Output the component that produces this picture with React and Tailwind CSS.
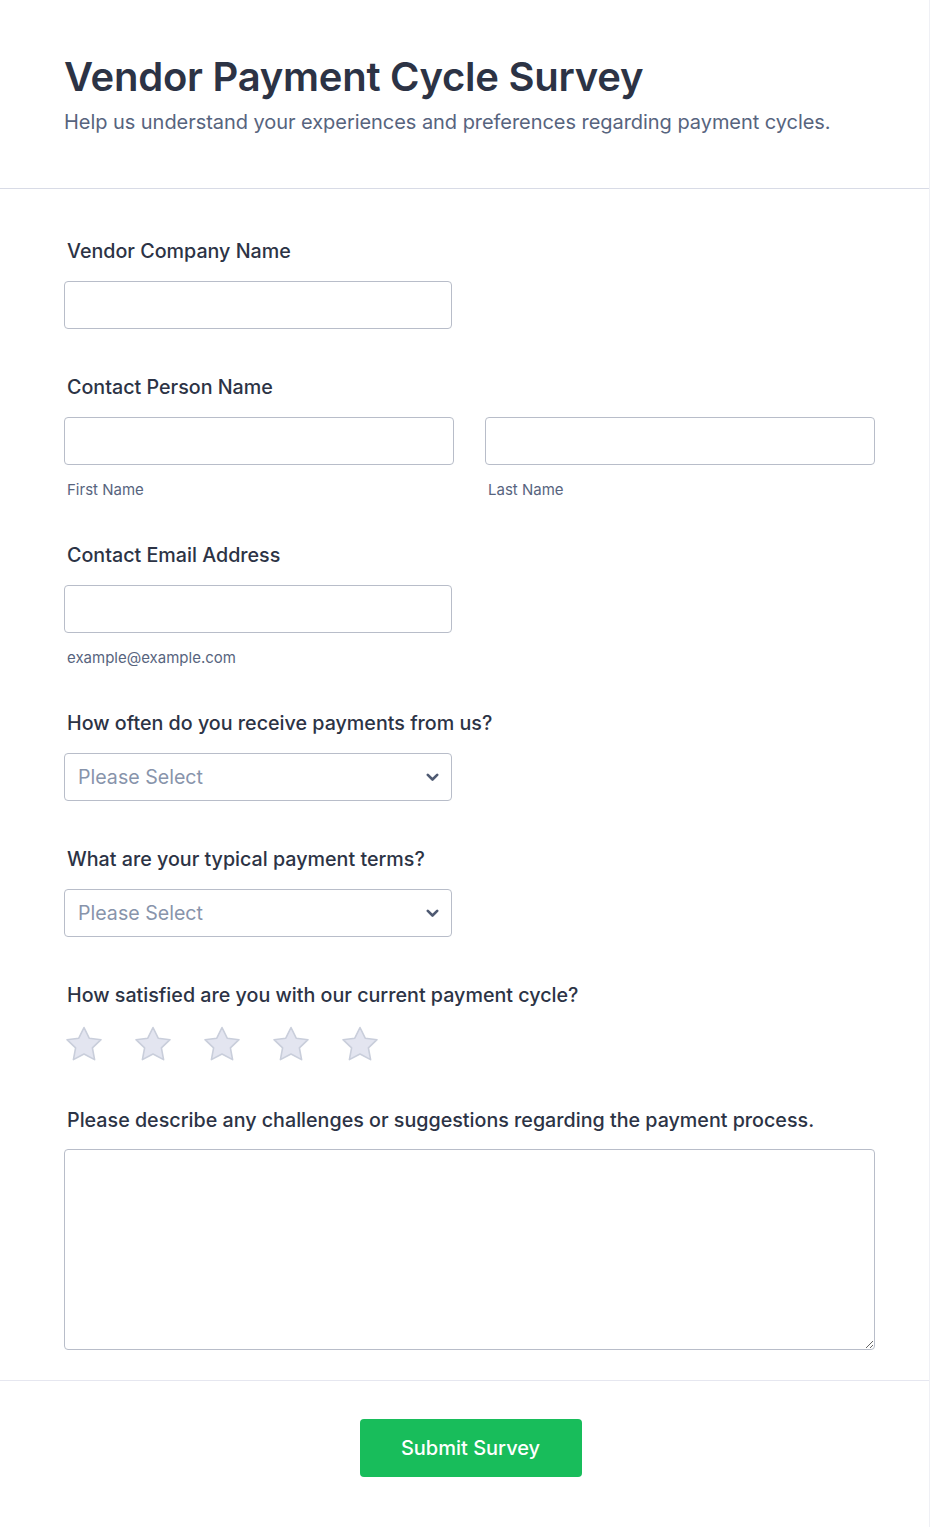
const label = 'block pl-[3px] text-[19.7px] leading-[28px] font-medium text-[#2c3345]';
const input = 'block h-[48px] rounded-[4px] border border-[#b8bdc9] bg-white px-3 text-[18px] outline-none';
const sub = 'mt-[15px] pl-[3px] text-[15px] leading-[20px] text-[#57647e]';

function Star() {
  return (
    <svg width="40" height="38" viewBox="0 0 40 38" className="block">
      <path
        d="M20 2.5 L25.2 13.2 L37 14.7 L28.4 22.9 L30.6 34.6 L20 29 L9.4 34.6 L11.6 22.9 L3 14.7 L14.8 13.2 Z"
        fill="#e3e5f0"
        stroke="#c9cedb"
        strokeWidth="1.6"
        strokeLinejoin="round"
      />
    </svg>
  );
}

function Select() {
  return (
    <div className="relative w-[388px]">
      <div className="flex items-center h-[48px] rounded-[4px] border border-[#b8bdc9] bg-white pl-[13px] pt-[1px] text-[19.6px] text-[#8894ab]">
        Please Select
      </div>
      <svg width="13" height="9" viewBox="0 0 13 9" className="absolute right-[13px] top-[20px]">
        <path d="M1.8 1.8 L6.5 6.5 L11.2 1.8" fill="none" stroke="#4f5a72" strokeWidth="2.6" strokeLinecap="round" strokeLinejoin="round" />
      </svg>
    </div>
  );
}

export default function App() {
  return (
    <div className="min-h-screen bg-white font-['Inter','Liberation_Sans',sans-serif] border-r border-[#eff0f5]">
      {/* Header */}
      <div className="px-16 pt-[52px] pb-[52px] border-b border-[#d8dbe6]">
        <h1 className="text-[40px] leading-[50px] font-semibold text-[#2c3345] tracking-[-0.25px]">
          Vendor Payment Cycle Survey
        </h1>
        <p className="mt-[6px] text-[20px] leading-[28px] text-[#57647e] tracking-[-0.05px]">
          Help us understand your experiences and preferences regarding payment cycles.
        </p>
      </div>

      {/* Fields */}
      <div className="px-16 pt-[48px]">
        <div className="pb-[44px]">
          <label className={label}>Vendor Company Name</label>
          <input className={`${input} mt-[16px] w-[388px]`} />
        </div>

        <div className="pb-[41px]">
          <label className={label}>Contact Person Name</label>
          <div className="mt-[16px] grid grid-cols-2 gap-[31px] w-[811px]">
            <div>
              <input className={`${input} w-full`} />
              <div className={sub}>First Name</div>
            </div>
            <div>
              <input className={`${input} w-full`} />
              <div className={sub}>Last Name</div>
            </div>
          </div>
        </div>

        <div className="pb-[41px]">
          <label className={label}>Contact Email Address</label>
          <input className={`${input} mt-[16px] w-[388px]`} />
          <div className={sub}>example@example.com</div>
        </div>

        <div className="pb-[44px]">
          <label className={label}>How often do you receive payments from us?</label>
          <div className="mt-[16px]">
            <Select />
          </div>
        </div>

        <div className="pb-[44px]">
          <label className={label}>What are your typical payment terms?</label>
          <div className="mt-[16px]">
            <Select />
          </div>
        </div>

        <div className="pb-[43px]">
          <label className={label}>How satisfied are you with our current payment cycle?</label>
          <div className="mt-[16px] flex gap-[29px]">
            <Star />
            <Star />
            <Star />
            <Star />
            <Star />
          </div>
        </div>

        <div className="pb-[30px]">
          <label className={label}>Please describe any challenges or suggestions regarding the payment process.</label>
          <textarea className="mt-[15px] block w-[811px] h-[201px] rounded-[4px] border border-[#b8bdc9] bg-white p-3 outline-none" />
        </div>
      </div>

      {/* Footer */}
      <div className="border-t border-[#e6e7f0] pt-[38px] pb-[50px] pl-[12px] flex justify-center">
        <button className="w-[222px] h-[58px] rounded-[4px] bg-[#18bd5b] text-white text-[20px] font-medium">
          Submit Survey
        </button>
      </div>
    </div>
  );
}
